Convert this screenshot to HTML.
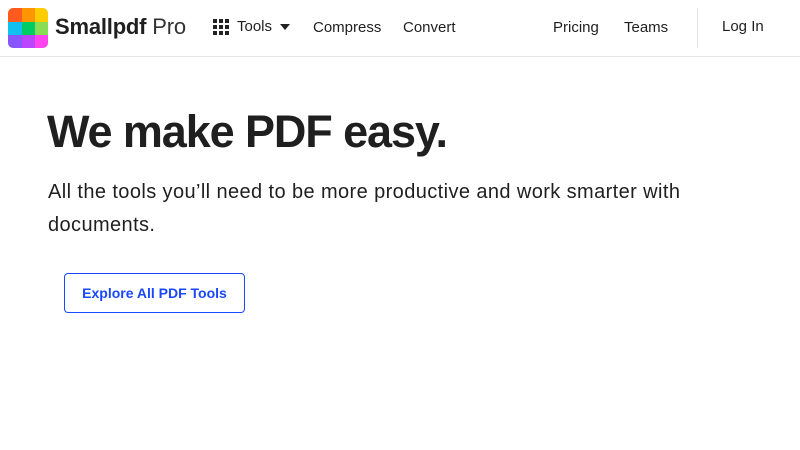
<!DOCTYPE html>
<html><head><style>
body{margin:0;width:800px;height:450px;background:#fff;font-family:"Liberation Sans",sans-serif;color:#1f1f1f;overflow:hidden;position:relative}
.hdr{position:absolute;left:0;top:0;width:800px;height:56px;border-bottom:1px solid #e6e6e6}
.logo{position:absolute;left:8px;top:8px;width:40px;height:40px;border-radius:5px;overflow:hidden;display:grid;grid-template-columns:14px 13px 13px;grid-template-rows:14px 13px 13px}
.t{position:absolute;font-size:15px;top:19px}
</style></head><body>
<div class="hdr">
<div class="logo">
<div style="background:#ff5a1f"></div><div style="background:#ff9500"></div><div style="background:#ffcc00"></div>
<div style="background:#10c0f0"></div><div style="background:#00cc66"></div><div style="background:#88dd55"></div>
<div style="background:#8855ff"></div><div style="background:#bb44ff"></div><div style="background:#ff44ee"></div>
</div>
<div class="t" style="left:55px;top:14px;font-size:22px;font-weight:bold;letter-spacing:-0.2px">Smallpdf <span style="font-weight:normal;color:#333">Pro</span></div>
<svg style="position:absolute;left:213px;top:19px" width="16" height="16"><g fill="#222"><rect x="0" y="0" width="4" height="4"/><rect x="6" y="0" width="4" height="4"/><rect x="12" y="0" width="4" height="4"/><rect x="0" y="6" width="4" height="4"/><rect x="6" y="6" width="4" height="4"/><rect x="12" y="6" width="4" height="4"/><rect x="0" y="12" width="4" height="4"/><rect x="6" y="12" width="4" height="4"/><rect x="12" y="12" width="4" height="4"/></g></svg>
<div class="t" style="left:237px;top:18px">Tools</div>
<svg style="position:absolute;left:280px;top:24px" width="10" height="6"><path d="M0 0H10L5 6Z" fill="#222"/></svg>
<div class="t" style="left:313px">Compress</div>
<div class="t" style="left:403px">Convert</div>
<div class="t" style="left:553px">Pricing</div>
<div class="t" style="left:624px">Teams</div>
<div style="position:absolute;left:697px;top:8px;width:1px;height:40px;background:#e0e0e0"></div>
<div class="t" style="left:722px;top:18px">Log In</div>
</div>
<div style="position:absolute;left:47px;top:106px;font-size:45px;font-weight:bold;letter-spacing:-1.1px">We make PDF easy.</div>
<div style="position:absolute;left:48px;top:176px;width:700px;font-size:20px;line-height:33px;letter-spacing:0.4px">All the tools you’ll need to be more productive and work smarter with<br>documents.</div>
<div style="position:absolute;left:64px;top:273px;width:179px;height:38px;border:1px solid #1a48ff;border-radius:4px;color:#1a48ff;font-weight:bold;font-size:14px;text-align:center;line-height:38px">Explore All PDF Tools</div>
</body></html>
